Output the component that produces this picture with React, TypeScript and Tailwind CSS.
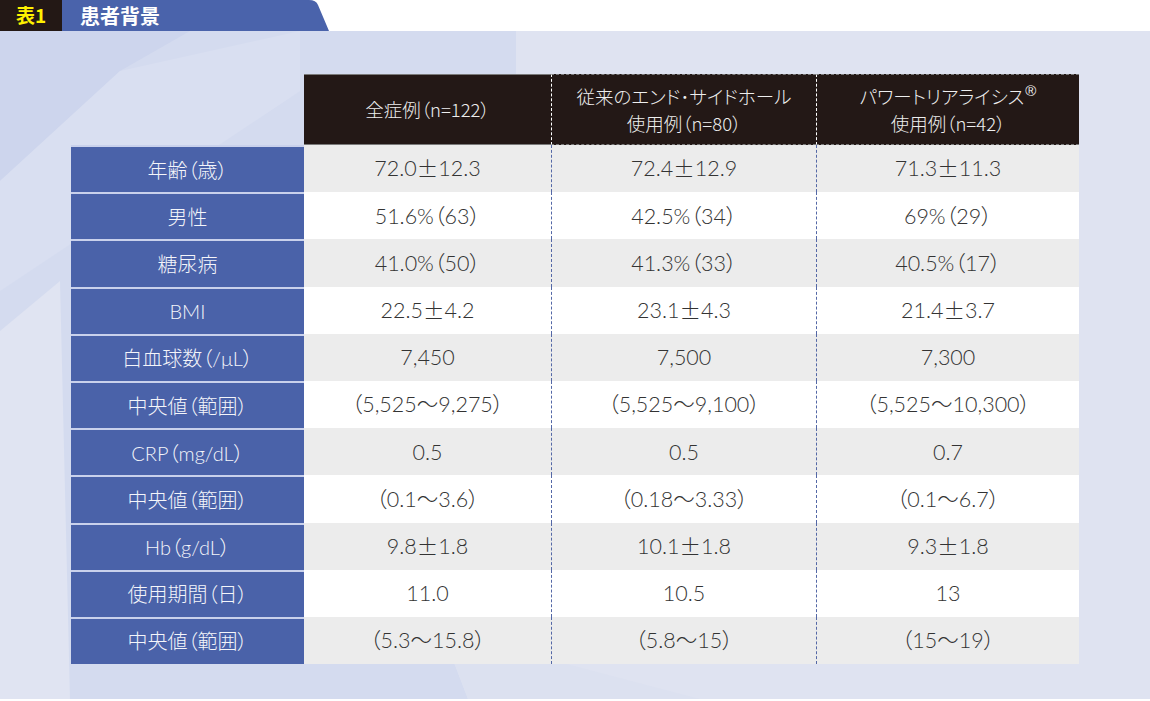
const latin = "font-['Lato','Liberation_Sans','Noto_Sans_CJK_JP',sans-serif] [font-feature-settings:'palt']";
const cjk = "font-['Noto_Sans_CJK_JP','Liberation_Sans',sans-serif] [font-feature-settings:'palt']";

const rows: [string, string, string, string][] = [
  ["年齢（歳）", "72.0±12.3", "72.4±12.9", "71.3±11.3"],
  ["男性", "51.6%（63）", "42.5%（34）", "69%（29）"],
  ["糖尿病", "41.0%（50）", "41.3%（33）", "40.5%（17）"],
  ["BMI", "22.5±4.2", "23.1±4.3", "21.4±3.7"],
  ["白血球数（/μL）", "7,450", "7,500", "7,300"],
  ["中央値（範囲）", "（5,525～9,275）", "（5,525～9,100）", "（5,525～10,300）"],
  ["CRP（mg/dL）", "0.5", "0.5", "0.7"],
  ["中央値（範囲）", "（0.1～3.6）", "（0.18～3.33）", "（0.1～6.7）"],
  ["Hb（g/dL）", "9.8±1.8", "10.1±1.8", "9.3±1.8"],
  ["使用期間（日）", "11.0", "10.5", "13"],
  ["中央値（範囲）", "（5.3～15.8）", "（5.8～15）", "（15～19）"],
];

// the ± sign is wider in the print layout, take it from the CJK face
function Value({ text }: { text: string }) {
  const parts = text.split("±");
  if (parts.length === 1) return <>{text}</>;
  return (
    <>
      {parts[0]}
      <span className={`${cjk} font-light`}>±</span>
      {parts[1]}
    </>
  );
}

function Background() {
  // faint facets behind the table
  return (
    <svg
      className="absolute inset-0 h-full w-full"
      viewBox="0 0 1150 668"
      preserveAspectRatio="none"
    >
      <rect width="1150" height="668" fill="#dfe3f1" />
      <polygon points="0,0 516,0 516,130 442,600 468,668 62,668 0,420" fill="#d4dbef" />
      <polygon points="0,0 190,0 120,40 0,150" fill="#cdd5ed" />
      <polygon points="0,150 120,40 300,0 300,60 0,260" fill="#d9dff1" />
      <polygon points="0,300 60,250 70,668 0,668" fill="#e0e4f2" />
      <polygon points="468,668 442,600 700,668" fill="#dce1f0" />
    </svg>
  );
}

export default function App() {
  return (
    <div className="h-[701px] w-[1150px] bg-white">
      {/* Title tab */}
      <div className="flex h-[31px] items-stretch">
        <div className={`flex w-[62px] items-center justify-center bg-[#231815] text-[19px] font-bold text-[#fff100] ${cjk}`}>
          表1
        </div>
        <div className={`flex w-[243px] items-center bg-[#4a63ab] pl-[18px] text-[20px] font-bold text-white ${cjk}`}>
          患者背景
        </div>
        <svg width="24" height="31" viewBox="0 0 24 31" className="block">
          <path d="M0 0 H4 Q11 0 13 5 L24 31 H0 Z" fill="#4a63ab" />
        </svg>
      </div>

      {/* Panel */}
      <div className="relative h-[668px] overflow-hidden">
        <Background />
        <div className="relative pl-[71px] pt-[43px]">
          <div className="grid grid-cols-[233px_247px_265px_263px]">
            {/* header */}
            <div />
            <div className={`flex h-[71px] items-center justify-center border-t border-b border-[#7a7a7a] bg-[#231816] text-[18.5px] font-light text-[#eeeeee] ${cjk}`}>
              全症例（n=122）
            </div>
            <div className={`flex h-[71px] flex-col items-center justify-center border-t border-b border-l border-[#7a7a7a] border-l-white border-dashed bg-[#231816] text-[18.5px] font-light leading-[27px] text-[#eeeeee] ${cjk}`}>
              <span>従来のエンド･サイドホール</span>
              <span>使用例（n=80）</span>
            </div>
            <div className={`flex h-[71px] flex-col items-center justify-center border-t border-b border-l border-[#7a7a7a] border-l-white border-dashed bg-[#231816] text-[18.5px] font-light leading-[27px] text-[#eeeeee] ${cjk}`}>
              <span className="flex items-start">
                パワートリアライシス
                <span className="ml-[1px] font-['Liberation_Sans',sans-serif] text-[15px] leading-[16px]">®</span>
              </span>
              <span>使用例（n=42）</span>
            </div>

            {/* body */}
            {rows.map((r, i) => {
              const bg = i % 2 === 0 ? "bg-[#ececec]" : "bg-white";
              return (
                <div key={i} className="contents">
                  <div className={`flex h-[47.2px] items-center justify-center border-t-2 border-[#c9d1ec] bg-[#4a62a9] text-[20px] font-light text-[#f4f5fa] ${latin}`}>
                    {r[0]}
                  </div>
                  <div className={`flex h-[47.2px] items-center justify-center ${bg} text-[21.5px] font-light text-[#333333] ${latin}`}>
                    <Value text={r[1]} />
                  </div>
                  <div className={`flex h-[47.2px] items-center justify-center border-l border-dashed border-[#5468a6] ${bg} text-[21.5px] font-light text-[#333333] ${latin}`}>
                    <Value text={r[2]} />
                  </div>
                  <div className={`flex h-[47.2px] items-center justify-center border-l border-dashed border-[#5468a6] ${bg} text-[21.5px] font-light text-[#333333] ${latin}`}>
                    <Value text={r[3]} />
                  </div>
                </div>
              );
            })}
          </div>
        </div>
      </div>
    </div>
  );
}
